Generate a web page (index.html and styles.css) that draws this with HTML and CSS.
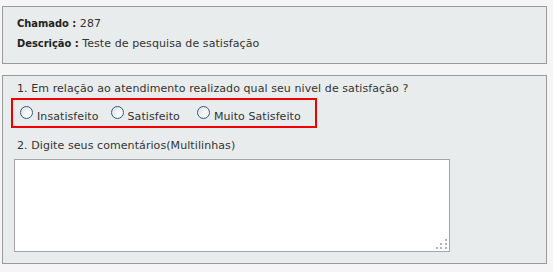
FILE: index.html
```html
<!DOCTYPE html>
<html lang="pt-BR">
<head>
<meta charset="utf-8">
<title>Pesquisa de satisfação</title>
<link rel="stylesheet" href="styles.css">
</head>
<body>
<div class="page">
  <section class="box info">
    <p class="line"><b>Chamado :</b> 287</p>
    <p class="line"><b>Descrição :</b> Teste de pesquisa de satisfação</p>
  </section>
  <section class="box survey">
    <p class="line">1. Em relação ao atendimento realizado qual seu nivel de satisfação ?</p>
    <div class="choices">
      <label class="choice c1"><input type="radio" name="sat"><span>Insatisfeito</span></label>
      <label class="choice c2"><input type="radio" name="sat"><span>Satisfeito</span></label>
      <label class="choice c3"><input type="radio" name="sat"><span>Muito Satisfeito</span></label>
    </div>
    <p class="line q2">2. Digite seus comentários(Multilinhas)</p>
    <div class="ta-wrap">
      <textarea class="ta"></textarea>
      <svg class="grip" width="12" height="12" viewBox="0 0 12 12">
        <rect x="9" y="1" width="2" height="2" fill="#b4b4b4"/>
        <rect x="4" y="5" width="2" height="2" fill="#b4b4b4"/>
        <rect x="9" y="5" width="2" height="2" fill="#b4b4b4"/>
        <rect x="0" y="9" width="2" height="2" fill="#b4b4b4"/>
        <rect x="4" y="9" width="2" height="2" fill="#b4b4b4"/>
        <rect x="9" y="9" width="2" height="2" fill="#b4b4b4"/>
      </svg>
    </div>
  </section>
</div>
</body>
</html>
```
FILE: styles.css
```css
html, body {
  margin: 0;
  padding: 0;
  background: #f5f5f5;
}
body {
  font-family: "DejaVu Sans", Verdana, sans-serif;
  font-size: 11px;
  color: #333333;
  letter-spacing: 0.08px;
}
.page {
  padding: 6px 6px 0 2px;
  display: flex;
  flex-direction: column;
  gap: 11px;
}
.box {
  background: #e9ecec;
  border: 1px solid #9a9a9a;
  padding: 0 14px;
}
.line {
  margin: 0;
  line-height: 14px;
  white-space: nowrap;
}
.line b {
  font-family: "DejaVu Sans Condensed", "DejaVu Sans", sans-serif;
  font-weight: bold;
  color: #222;
  letter-spacing: 0;
}
.info {
  padding-top: 10px;
  padding-bottom: 12px;
  display: flex;
  flex-direction: column;
  gap: 6px;
}
.survey {
  padding-top: 6px;
  padding-bottom: 11px;
}
.choices {
  margin: 2px 0 0 -6px;
  width: 306px;
  height: 30px;
  box-sizing: border-box;
  border: 2px solid #f20000;
  display: flex;
  align-items: flex-start;
  padding-left: 7px;
}
.choice {
  display: flex;
  align-items: flex-start;
}
.choice input {
  appearance: none;
  -webkit-appearance: none;
  margin: 6px 4px 0 0;
  width: 13px;
  height: 13px;
  box-sizing: border-box;
  border-radius: 50%;
  border: 1px solid #2a5a8c;
  background: radial-gradient(circle at 65% 65%, #ffffff 0%, #f0f0ee 45%, #d2d2cc 100%);
  box-shadow: inset 0 0 0 1px rgba(255,255,255,0.4);
}
.choice span {
  margin-top: 10px;
  line-height: 13px;
}
.c1 { margin-right: 12px; }
.c2 { margin-right: 17px; }
.q2 {
  margin-top: 11px;
}
.ta-wrap {
  position: relative;
  margin: 6px 0 0 -3px;
  width: 436px;
  height: 93px;
}
.ta {
  display: block;
  width: 436px;
  height: 93px;
  box-sizing: border-box;
  margin: 0;
  border: 1px solid #a5a5a5;
  background: #ffffff;
  resize: none;
  font-family: "DejaVu Sans", Verdana, sans-serif;
  font-size: 11px;
}
.grip {
  position: absolute;
  right: 2px;
  bottom: 2px;
}
```
